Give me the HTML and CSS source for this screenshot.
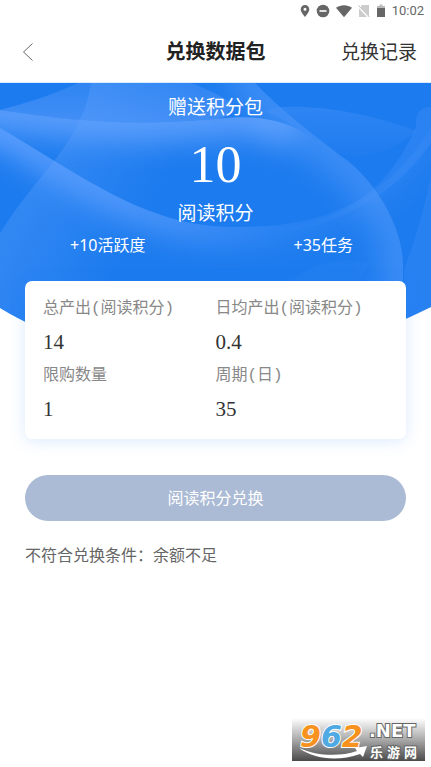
FILE: index.html
```html
<!DOCTYPE html>
<html lang="zh-CN">
<head>
<meta charset="utf-8">
<meta name="viewport" content="width=device-width, initial-scale=1">
<title>兑换数据包</title>
<link rel="stylesheet" href="styles.css">
</head>
<body>
<div class="status">
  <svg width="10" height="14" viewBox="0 0 10 14" aria-hidden="true"><path fill="#666" fill-rule="evenodd" d="M5 1a4.300 4.300 0 0 0-4.300 4.300C.7 8.500 5 13 5 13s4.300-4.500 4.300-7.700A4.300 4.300 0 0 0 5 1Zm0 2.800a1.500 1.500 0 1 1 0 3 1.500 1.500 0 0 1 0-3Z"/></svg>
  <svg width="14" height="14" viewBox="0 0 14 14" aria-hidden="true"><circle cx="7" cy="7" r="6.300" fill="#666"/><path d="M3.500 7h7" stroke="#fff" stroke-width="1.600"/></svg>
  <svg width="16" height="14" viewBox="0 0 16 14" aria-hidden="true"><path fill="#666" d="M0 3.800C4.500.3 11.500.3 16 3.800L8 13.300Z"/></svg>
  <svg width="12" height="14" viewBox="0 0 12 14" aria-hidden="true"><path fill="#ccc" d="M3.500 1H11v11L3 3.500ZM1 4.500 9 13H1Z"/><path d="m.5 1.500 11 11.500" stroke="#bbb"/></svg>
  <svg width="10" height="14" viewBox="0 0 10 14" aria-hidden="true"><path fill="#bbb" d="M3.500.5h3V2H9v4H1V2h2.500Z"/><path fill="#666" d="M1 4h8v9H1Z"/></svg>
  <span>10:02</span>
</div>
<header class="nav">
  <button class="back" type="button" aria-label="返回"><svg width="12" height="20" viewBox="0 0 12 20" aria-hidden="true"><path d="M10.500 1.500 1.500 10l9 8.500" fill="none" stroke="#666"/></svg></button>
  <h1>兑换数据包</h1>
  <a class="record" href="#">兑换记录</a>
</header>
<main>
  <section class="hero">
    <svg class="waves" viewBox="0 0 431 260" preserveAspectRatio="none" aria-hidden="true">
      <defs>
        <filter id="soft" filterUnits="userSpaceOnUse" x="-80" y="-80" width="600" height="420"><feGaussianBlur stdDeviation="15"/></filter>
        <linearGradient id="band" gradientUnits="userSpaceOnUse" x1="0" y1="0" x2="0" y2="40"><stop offset="0" stop-color="#5c9cfb" stop-opacity=".3"/><stop offset="1" stop-color="#5c9cfb" stop-opacity=".6"/></linearGradient>
        <linearGradient id="fade" gradientUnits="userSpaceOnUse" x1="0" y1="0" x2="300" y2="0"><stop offset="0" stop-color="#5fa0ff"/><stop offset=".5" stop-color="#5fa0ff" stop-opacity=".8"/><stop offset="1" stop-color="#5fa0ff" stop-opacity=".2"/></linearGradient>
        <linearGradient id="column" gradientUnits="userSpaceOnUse" x1="55" y1="75" x2="150" y2="125"><stop offset="0" stop-color="#68a6ff" stop-opacity=".28"/><stop offset="1" stop-color="#68a6ff" stop-opacity="0"/></linearGradient>
        <linearGradient id="crest" gradientUnits="userSpaceOnUse" x1="0" y1="22" x2="0" y2="76"><stop offset="0" stop-color="#4b94fa" stop-opacity=".4"/><stop offset="1" stop-color="#4b94fa" stop-opacity=".05"/></linearGradient>
        <linearGradient id="sweep" gradientUnits="userSpaceOnUse" x1="265" y1="0" x2="400" y2="0"><stop offset="0" stop-color="#4b94fa" stop-opacity="0"/><stop offset="1" stop-color="#4b94fa" stop-opacity=".3"/></linearGradient>
        <clipPath id="bowl"><path d="M0 0H431V224C300 289 140 309 0 225Z"/></clipPath>
        <clipPath id="dome"><path d="M0 27C75 39 135 43 215 36 258 31 288 37 311 55 365 96 393 145 408 190V260H0Z"/></clipPath>
        <clipPath id="below"><path d="M0 45C58 79 102 110 150 128 193 145 230 146 279 142 340 134 390 110 431 45V260H0Z"/></clipPath>
        <clipPath id="inside"><path d="M255 0C278 24 315 54 348 78 382 106 404 150 403 185V260H0V0Z"/></clipPath>
      </defs>
      <g clip-path="url(#bowl)">
        <path fill="#1c7bee" d="M0 0h431v260H0Z"/>
        <path fill="url(#band)" d="M0 27C27 20 52 12 78 0H191C235 17 250 30 215 36 135 43 70 39 0 27Z"/>
        <g clip-path="url(#dome)"><path filter="url(#soft)" fill="none" stroke="#68a6ff" stroke-width="42" stroke-opacity=".85" d="M-30 22C75 36 135 40 215 33 250 29 275 32 296 48"/></g>
        <g clip-path="url(#below)"><path filter="url(#soft)" fill="none" stroke="url(#fade)" stroke-width="32" d="M-30 28 0 45C58 79 102 110 150 128 193 145 230 146 279 142 340 134 390 110 431 45"/></g>
        <g clip-path="url(#inside)"><path filter="url(#soft)" fill="none" stroke="#68a6ff" stroke-opacity=".42" stroke-width="44" d="M240-15 255 0C278 24 315 54 348 78 382 106 404 150 403 185V260"/></g>
        <path fill="url(#column)" d="M91 0C86 35 68 61 47 87 27 111 14 128 0 150V260H200V0Z"/>
        <path fill="url(#crest)" d="M264 28C290 18 358 26 417 48 389 72 362 78 329 68 300 50 288 36 264 28Z"/>
        <path fill="url(#sweep)" d="M431 24C419 24 415 31 416 44 402 75 386 98 359 117 330 135 301 144 261 148 318 153 390 120 431 60Z"/>
        <path fill="#4b94fa" opacity=".25" d="M431 92C421 140 412 164 404 187L406 250 431 230Z"/>
        <path fill="#4b94fa" opacity=".12" d="M290 200C309 180 341 172 368 181L358 200Z"/>
      </g>
    </svg>
    <p class="line">赠送积分包</p>
    <p class="amount">10</p>
    <p class="line">阅读积分</p>
    <div class="bonus"><span>+10活跃度</span><span>+35任务</span></div>
  </section>
  <dl class="card">
    <div><dt>总产出(阅读积分)</dt><dd>14</dd></div>
    <div><dt>日均产出(阅读积分)</dt><dd>0.4</dd></div>
    <div><dt>限购数量</dt><dd>1</dd></div>
    <div><dt>周期(日)</dt><dd>35</dd></div>
  </dl>
  <button class="redeem" type="button">阅读积分兑换</button>
  <p class="notice">不符合兑换条件：余额不足</p>
</main>
<footer class="brand">
  <svg width="133" height="43" viewBox="0 0 133 43" role="img" aria-label="962.NET 乐游网">
    <defs><linearGradient id="plate" x1="0" y1="0" x2="0" y2="1"><stop offset="0" stop-color="#fff"/><stop offset=".5" stop-color="#aaa"/><stop offset="1" stop-color="#4a4a4a"/></linearGradient></defs>
    <path fill="url(#plate)" d="M0 0h133v43H0Z"/>
    <path fill="#fff" d="M7 30C25 38 47 39 65 33L63 30 75 28 71 39 68 36C45 44 22 41 7 30Z"/>
    <text class="brand-num" x="8" y="29"><tspan class="orange">9</tspan><tspan class="blue">6</tspan><tspan class="orange">2</tspan></text>
    <text class="brand-text" x="77" y="19">.NET</text>
    <text class="brand-cn" x="78" y="39">乐</text><text class="brand-cn" x="95" y="39">游</text><text class="brand-cn" x="112" y="39">网</text>
  </svg>
</footer>
</body>
</html>
```
FILE: styles.css
```css
* { box-sizing: border-box; }
body {
  margin: 0;
  min-height: 100vh;
  display: flex;
  flex-direction: column;
  background: #fff;
  color: #333;
  font-family: "Noto Sans", "Noto Sans CJK SC", sans-serif;
}
h1, p, dl, dd { margin: 0; }
button { border: 0; padding: 0; font: inherit; }
.status {
  height: 22px;
  padding-right: 7px;
  display: flex;
  align-items: center;
  justify-content: flex-end;
  gap: 6px;
  color: #666;
  font: 13px/22px Roboto, sans-serif;
}
.nav {
  height: 61px;
  padding: 0 14px;
  display: grid;
  grid-template-columns: 1fr auto 1fr;
  align-items: center;
  border-bottom: 1px solid #d9ecff;
}
.back { justify-self: start; display: flex; padding: 0 8px; background: none; }
h1 { color: #222; font-size: 20px; line-height: 30px; }
.record { justify-self: end; color: #333; font-size: 19px; line-height: 30px; text-decoration: none; }
.hero { position: relative; text-align: center; color: #fff; padding-top: 10px; }
.waves { position: absolute; z-index: -1; top: 0; left: 0; width: 100%; height: 260px; }
.line { font-size: 19px; line-height: 28px; }
.amount { padding-top: 10px; font: 52px/68px "Liberation Serif", serif; }
.bonus {
  display: grid;
  grid-template-columns: 1fr 1fr;
  padding: 6px 0 24px;
  font-size: 16px;
  line-height: 24px;
}
.card {
  margin: 0 25px;
  padding: 16px 18px 8px;
  display: grid;
  grid-template-columns: 1fr 1fr;
  background: #fff;
  border-radius: 7px;
  box-shadow: 0 2px 16px rgba(40, 130, 255, .17);
}
dt {
  color: #888;
  font: 16px/24px "Liberation Mono", "Noto Sans CJK SC", monospace;
  white-space: nowrap;
}
dd { padding: 6px 0 7px; font: 21px/30px "Liberation Serif", serif; }
.redeem {
  display: block;
  width: calc(100% - 50px);
  height: 46px;
  margin: 36px 25px 0;
  padding-bottom: 2px;
  border-radius: 23px;
  background: #abbbd5;
  color: #fff;
  font-size: 16px;
}
.notice { margin: 22px 25px; color: #666; font-size: 16px; line-height: 24px; }
.brand { margin-top: auto; padding: 0 6px 6px 0; display: flex; justify-content: flex-end; }
.brand text { stroke-width: 2px; paint-order: stroke; font-weight: 700; }
.brand-num { font: italic 30px "DejaVu Sans", sans-serif; stroke: #fff; }
.orange { fill: #f7921e; }
.blue { fill: #4fa9e2; }
.brand-text { fill: #fff; stroke: #666; font: 18px "DejaVu Sans", sans-serif; }
.brand-cn { fill: #fff; stroke: #666; font: 13px "Noto Sans CJK SC", sans-serif; }
```
